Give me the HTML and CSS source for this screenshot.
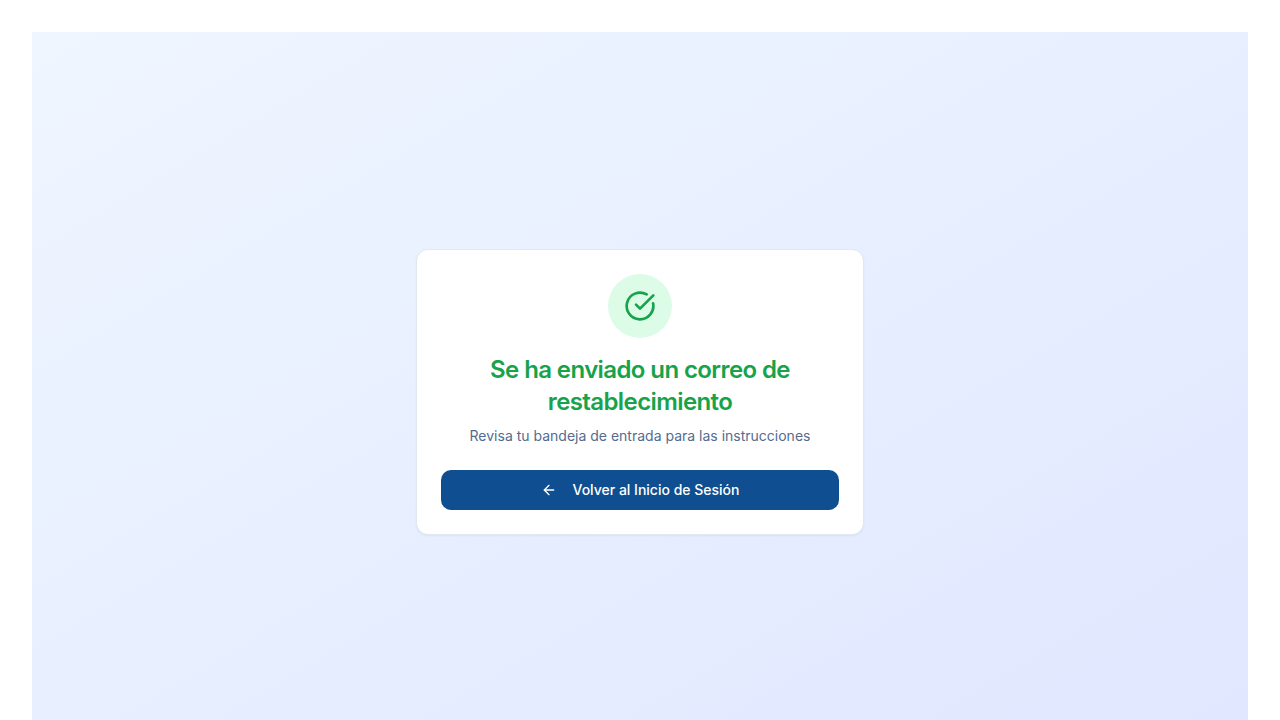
FILE: index.html
```html
<!DOCTYPE html>
<html lang="es">
<head>
  <meta charset="utf-8">
  <meta name="viewport" content="width=device-width, initial-scale=1">
  <title>Correo de restablecimiento enviado</title>
  <link rel="stylesheet" href="styles.css">
</head>
<body>
  <main class="screen">
    <section class="card">
      <header class="card-header">
        <div class="status-badge">
          <svg class="status-icon" viewBox="0 0 24 24" aria-hidden="true">
            <path d="M21.801 10A10 10 0 1 1 17 3.335"/>
            <path d="m9 11 3 3L22 4"/>
          </svg>
        </div>
        <h1 class="card-title">Se ha enviado un correo de restablecimiento</h1>
        <p class="card-description">Revisa tu bandeja de entrada para las instrucciones</p>
      </header>
      <div class="card-content">
        <button class="button" type="button">
          <svg class="button-icon" viewBox="0 0 24 24" aria-hidden="true">
            <path d="m12 19-7-7 7-7"/>
            <path d="M19 12H5"/>
          </svg>
          Volver al Inicio de Sesión
        </button>
      </div>
    </section>
  </main>
</body>
</html>
```

FILE: styles.css
```css
* {
  box-sizing: border-box;
}

body {
  margin: 0;
  padding: 32px;
  background: #ffffff;
  font-family: Inter, sans-serif;
}

.screen {
  display: flex;
  align-items: center;
  justify-content: center;
  min-height: 100vh;
  padding: 16px;
  background: linear-gradient(to bottom right, #eff6ff, #e0e7ff);
}

.card {
  width: 100%;
  max-width: 448px;
  border: 1px solid #e2e8f0;
  border-radius: 12px;
  background: #ffffff;
  box-shadow: 0 1px 2px rgba(0, 0, 0, 0.05);
}

.card-header {
  display: flex;
  flex-direction: column;
  align-items: center;
  padding: 24px;
  text-align: center;
}

.status-badge {
  display: flex;
  align-items: center;
  justify-content: center;
  width: 64px;
  height: 64px;
  margin-bottom: 16px;
  border-radius: 50%;
  background: #dcfce7;
}

.status-icon,
.button-icon {
  fill: none;
  stroke: currentColor;
  stroke-width: 2;
  stroke-linecap: round;
  stroke-linejoin: round;
}

.status-icon {
  width: 32px;
  height: 32px;
  color: #16a34a;
}

.card-title {
  margin: 0;
  color: #16a34a;
  font-size: 24px;
  font-weight: 600;
  line-height: 32px;
  letter-spacing: -0.025em;
}

.card-description {
  margin: 8px 0 0;
  color: #526d8f;
  font-size: 14px;
  line-height: 20px;
}

.card-content {
  padding: 0 24px 24px;
}

.button {
  display: flex;
  align-items: center;
  justify-content: center;
  gap: 16px;
  width: 100%;
  height: 40px;
  padding: 8px 16px;
  border: 0;
  border-radius: 10px;
  background: #0f4f91;
  color: #ffffff;
  font-family: inherit;
  font-size: 14px;
  font-weight: 500;
  line-height: 20px;
  cursor: pointer;
}

.button-icon {
  width: 16px;
  height: 16px;
}
```
